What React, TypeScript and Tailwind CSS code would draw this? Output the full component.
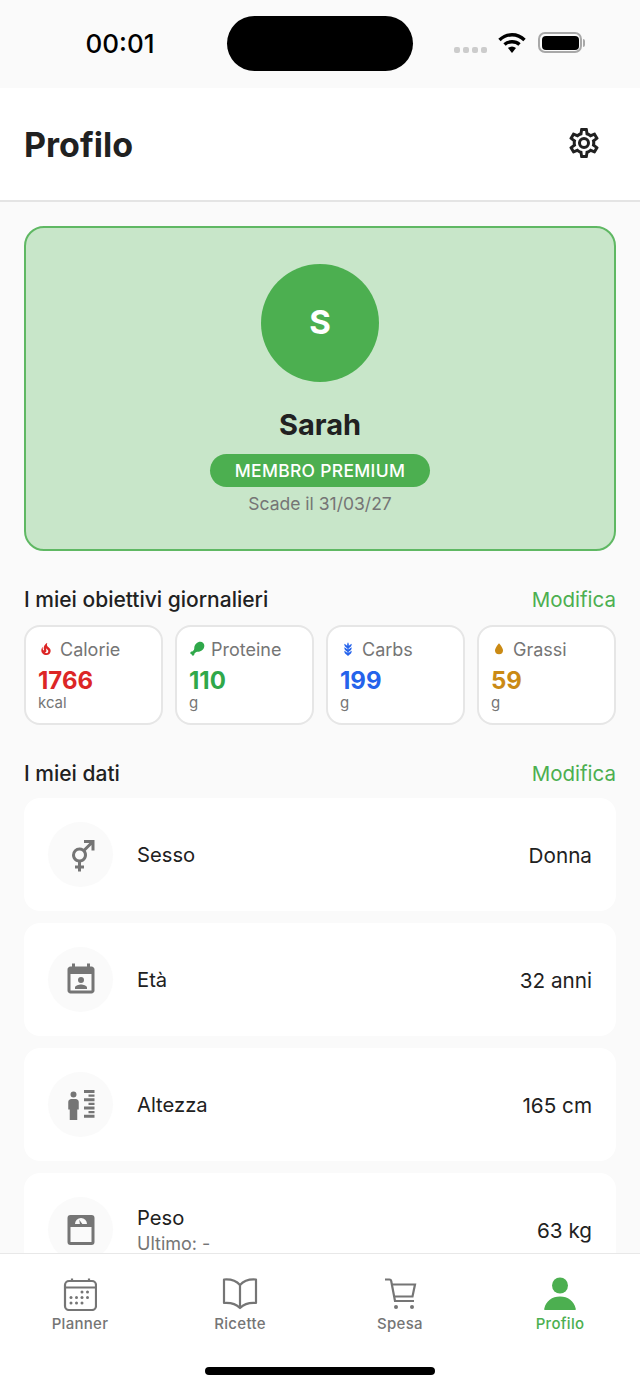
import React from "react";

const P = {
  cog: "M12,8A4,4 0 0,1 16,12A4,4 0 0,1 12,16A4,4 0 0,1 8,12A4,4 0 0,1 12,8M12,10A2,2 0 0,0 10,12A2,2 0 0,0 12,14A2,2 0 0,0 14,12A2,2 0 0,0 12,10M10,22C9.75,22 9.54,21.82 9.5,21.58L9.13,18.93C8.5,18.68 7.96,18.34 7.44,17.94L4.95,18.95C4.73,19.03 4.46,18.95 4.34,18.73L2.34,15.27C2.21,15.05 2.27,14.78 2.46,14.63L4.57,12.97L4.5,12L4.57,11L2.46,9.37C2.27,9.22 2.21,8.95 2.34,8.73L4.34,5.27C4.46,5.05 4.73,4.96 4.95,5.05L7.44,6.05C7.96,5.66 8.5,5.32 9.13,5.07L9.5,2.42C9.54,2.18 9.75,2 10,2H14C14.25,2 14.46,2.18 14.5,2.42L14.87,5.07C15.5,5.32 16.04,5.66 16.56,6.05L19.05,5.05C19.27,4.96 19.54,5.05 19.66,5.27L21.66,8.73C21.79,8.95 21.73,9.22 21.54,9.37L19.43,11L19.5,12L19.43,13L21.54,14.63C21.73,14.78 21.79,15.05 21.66,15.27L19.66,18.73C19.54,18.95 19.27,19.04 19.05,18.95L16.56,17.95C16.04,18.34 15.5,18.68 14.87,18.93L14.5,21.58C14.46,21.82 14.25,22 14,22H10M11.25,4L10.88,6.61C9.68,6.86 8.62,7.5 7.85,8.39L5.44,7.35L4.69,8.65L6.8,10.2C6.4,11.37 6.4,12.64 6.8,13.8L4.68,15.36L5.43,16.66L7.86,15.62C8.63,16.5 9.68,17.14 10.87,17.38L11.24,20H12.76L13.13,17.39C14.32,17.14 15.37,16.5 16.14,15.62L18.57,16.66L19.32,15.36L17.2,13.81C17.6,12.64 17.6,11.37 17.2,10.2L19.31,8.65L18.56,7.35L16.15,8.39C15.38,7.5 14.32,6.86 13.12,6.62L12.75,4H11.25Z",
  fire: "M17.66 11.2C17.43 10.9 17.15 10.64 16.89 10.38C16.22 9.78 15.46 9.35 14.82 8.72C13.33 7.26 13 4.85 13.95 3C13 3.23 12.17 3.75 11.46 4.32C8.87 6.4 7.85 10.07 9.07 13.22C9.11 13.32 9.15 13.42 9.15 13.55C9.15 13.77 9 13.97 8.8 14.05C8.57 14.15 8.33 14.09 8.14 13.93C8.08 13.88 8.04 13.83 8 13.76C6.87 12.33 6.69 10.28 7.45 8.64C5.78 10 4.87 12.3 5 14.47C5.06 14.97 5.12 15.47 5.29 15.97C5.43 16.57 5.7 17.17 6 17.7C7.08 19.43 8.95 20.67 10.96 20.92C13.1 21.19 15.39 20.8 17.03 19.32C18.86 17.66 19.5 15 18.56 12.72L18.43 12.46C18.22 12 17.66 11.2 17.66 11.2M14.5 17.5C14.22 17.74 13.76 18 13.4 18.1C12.28 18.5 11.16 17.94 10.5 17.28C11.69 17 12.4 16.12 12.61 15.23C12.78 14.43 12.46 13.77 12.33 13C12.21 12.26 12.23 11.63 12.5 10.94C12.69 11.32 12.89 11.7 13.13 12C13.9 13 15.11 13.44 15.37 14.8C15.41 14.94 15.43 15.08 15.43 15.23C15.46 16.05 15.1 16.95 14.5 17.5H14.5Z",
  drum: "M23 7C23 3.5 20.5 1 17 1C12.5 1 8.5 5 8 9.5C7.8 11 8 12.5 7.3 13.5L5 15.8C4.3 15.6 3.3 15.7 2.6 16.4C1.7 17.3 1.7 18.6 2.4 19.3C2.8 19.7 3.3 19.9 3.9 19.9C3.9 20.5 4.1 21 4.5 21.4C5.2 22.2 6.5 22.2 7.4 21.3C8.1 20.6 8.2 19.7 8 19L10.3 16.7C11.3 16 13 16.2 14.5 16C19 15.5 23 11.5 23 7Z",
  barley: "M7.33,18.33C6.5,17.17 6.5,15.83 6.5,14.5C8.17,15.5 9.83,16.5 10.67,17.67L11,18.23V15.95C9.5,15.05 8.08,14.13 7.33,13.08C6.5,11.92 6.5,10.58 6.5,9.25C8.17,10.25 9.83,11.25 10.67,12.42L11,13V10.7C9.5,9.8 8.08,8.88 7.33,7.83C6.5,6.67 6.5,5.33 6.5,4C8.17,5 9.83,6 10.67,7.17C10.77,7.31 10.86,7.46 10.94,7.62C10.77,7 10.66,6.42 10.66,5.83C10.66,4.5 11.33,3.17 12,2C12.67,3.17 13.33,4.5 13.33,5.83C13.33,6.42 13.23,7 13.06,7.62C13.14,7.46 13.23,7.31 13.33,7.17C14.17,6 15.83,5 17.5,4C17.5,5.33 17.5,6.67 16.67,7.83C15.92,8.88 14.5,9.8 13,10.7V13L13.33,12.42C14.17,11.25 15.83,10.25 17.5,9.25C17.5,10.58 17.5,11.92 16.67,13.08C15.92,14.13 14.5,15.05 13,15.95V18.23L13.33,17.67C14.17,16.5 15.83,15.5 17.5,14.5C17.5,15.83 17.5,17.17 16.67,18.33C15.92,19.38 14.5,20.3 13,21.2V22H11V21.2C9.5,20.3 8.08,19.38 7.33,18.33Z",
  water: "M12,20A6,6 0 0,1 6,14C6,10 12,3.25 12,3.25C12,3.25 18,10 18,14A6,6 0 0,1 12,20Z",
  gender: "M17.58,4H14V2H21V9H19V5.41L15.17,9.24C15.69,10.03 16,11 16,12C16,14.42 14.28,16.44 12,16.9V19H14V21H12V23H10V21H8V19H10V16.9C7.72,16.44 6,14.42 6,12A5,5 0 0,1 11,7C12,7 12.96,7.3 13.75,7.83L17.58,4M11,9A3,3 0 0,0 8,12A3,3 0 0,0 11,15A3,3 0 0,0 14,12A3,3 0 0,0 11,9Z",
  calendar: "M19 3H18V1H16V3H8V1H6V3H5C3.9 3 3 3.9 3 5V19C3 20.1 3.9 21 5 21H19C20.1 21 21 20.1 21 19V5C21 3.9 20.1 3 19 3M19 19H5V8H19V19M12 10A2 2 0 1 1 12 14A2 2 0 1 1 12 10M8 18V17C8 15.7 10.7 15 12 15S16 15.7 16 17V18H8Z",
  height: "M7 3A2 2 0 1 1 7 7A2 2 0 1 1 7 3M5.5 8H8.5C9.6 8 10.5 8.9 10.5 10V15H9.5V22H4.5V15H3.5V10C3.5 8.9 4.4 8 5.5 8M14 2H21V4H14V2M17 5H21V6.5H17V5M14 7.5H21V9.5H14V7.5M17 10.5H21V12H17V10.5M14 13H21V15H14V13M17 16H21V17.5H17V16M14 18.5H21V20.5H14V18.5",
  scale: "M5,2H19A2,2 0 0,1 21,4V20A2,2 0 0,1 19,22H5A2,2 0 0,1 3,20V4A2,2 0 0,1 5,2M12,4A4,4 0 0,0 8,8H11.26L10.85,5.23L12.9,8H16A4,4 0 0,0 12,4M5,10V20H19V10H5Z",
};

function Mdi({ d, size, color }: { d: string; size: number; color: string }) {
  return (
    <svg width={size} height={size} viewBox="0 0 24 24" fill={color} className="shrink-0">
      <path d={d} />
    </svg>
  );
}

function Macro({ icon, label, value, unit, color }: { icon: string; label: string; value: string; unit: string; color: string }) {
  return (
    <div className="h-[100px] rounded-2xl border-2 border-[#e6e6e6] bg-white pl-[12px] pt-[10px]">
      <div className="flex h-[24px] items-center gap-[6px]">
        <Mdi d={icon} size={16} color={color} />
        <span className="text-[18px] text-[#757575]">{label}</span>
      </div>
      <div className="mt-[6px] text-[24px] leading-[28px] font-bold" style={{ color }}>{value}</div>
      <div className="-mt-[1px] text-[15px] leading-[18px] text-[#757575]">{unit}</div>
    </div>
  );
}

function DataRow({ icon, label, sub, value }: { icon: string; label: string; sub?: string; value: string }) {
  return (
    <div className="flex h-[113px] shrink-0 items-center rounded-2xl bg-white px-[24px]">
      <div className="flex h-[65px] w-[65px] items-center justify-center rounded-full bg-[#fafafa]">
        <Mdi d={icon} size={36} color="#757575" />
      </div>
      <div className="ml-[24px] flex-1">
        <div className="text-[20.2px] leading-[26px] text-[#212121]">{label}</div>
        {sub && <div className="mt-[3px] text-[18px] leading-[20px] text-[#757575]">{sub}</div>}
      </div>
      <div className="mt-[2px] text-[20.7px] text-[#212121]">{value}</div>
    </div>
  );
}

function SectionHead({ title }: { title: string }) {
  return (
    <div className="flex items-center justify-between">
      <span className="text-[21px] leading-[26px] font-medium text-[#212121]">{title}</span>
      <span className="text-[20.5px] leading-[26px] text-[#4caf50]">Modifica</span>
    </div>
  );
}

function NavItem({ label, active, children }: { label: string; active?: boolean; children: React.ReactNode }) {
  return (
    <div className="flex w-[160px] flex-col items-center">
      <div className="flex h-[36px] w-[36px] items-center justify-center">{children}</div>
      <span className={`mt-[3px] text-[15px] leading-[18px] font-medium tracking-[0.3px] ${active ? "text-[#4caf50]" : "text-[#757575]"}`}>{label}</span>
    </div>
  );
}

export default function App() {
  return (
    <div className="flex h-[1387px] w-[640px] flex-col overflow-hidden bg-[#fafafa] font-['Inter',sans-serif]">
      {/* status bar */}
      <div className="flex h-[88px] shrink-0 items-start bg-[#fafafa]">
        <div className="mt-[27px] w-[240px] text-center text-[26px] leading-[34px] font-medium text-black">00:01</div>
        <div className="mt-[16px] -ml-[13px] h-[55px] w-[186px] rounded-full bg-black" />
        <div className="mt-[32px] ml-[41px] flex items-center">
          <div className="mt-[15px] flex gap-[3px]">
            <i className="h-[6px] w-[6px] rounded-[2px] bg-[#cccccc]" />
            <i className="h-[6px] w-[6px] rounded-[2px] bg-[#cccccc]" />
            <i className="h-[6px] w-[6px] rounded-[2px] bg-[#cccccc]" />
            <i className="h-[6px] w-[6px] rounded-[2px] bg-[#cccccc]" />
          </div>
          <svg width="28" height="21" viewBox="0 0 28 21" className="ml-[11px]">
            <path d="M1.5 8C8.5 1 19.5 1 26.5 8" fill="none" stroke="#000" strokeWidth="3.4" />
            <path d="M6.5 12.5C10.5 8.8 17.5 8.8 21.5 12.5" fill="none" stroke="#000" strokeWidth="3.4" />
            <path d="M10 16C12.5 14 15.5 14 18 16L14 21Z" fill="#000" />
          </svg>
          <div className="ml-[12px] flex items-center">
            <div className="flex h-[21px] w-[44px] items-center justify-center rounded-[7px] border-2 border-[#a8a8a8]">
              <div className="h-[14px] w-[37px] rounded-[4px] bg-black" />
            </div>
            <div className="ml-[1px] h-[8px] w-[2px] rounded-r bg-[#a8a8a8]" />
          </div>
        </div>
      </div>

      {/* header */}
      <div className="flex h-[114px] shrink-0 items-center justify-between border-b-2 border-[#e4e4e4] bg-white pr-[38px] pl-[24px]">
        <span className="text-[34px] font-bold text-[#212121]">Profilo</span>
        <div className="-mt-[2px]"><Mdi d={P.cog} size={36} color="#212121" /></div>
      </div>

      {/* content */}
      <div className="flex min-h-0 flex-1 flex-col overflow-hidden px-[24px] pt-[24px]">
        <div className="flex h-[325px] shrink-0 flex-col items-center rounded-[20px] border-2 border-[#5fb863] bg-[#c8e6c9] pt-[36px]">
          <div className="flex h-[118px] w-[118px] items-center justify-center rounded-full bg-[#4caf50] text-[33px] font-bold text-white">S</div>
          <div className="mt-[22px] text-[29px] leading-[42px] font-bold text-[#212121]">Sarah</div>
          <div className="mt-[8px] flex h-[33px] w-[220px] items-center justify-center rounded-full bg-[#4caf50] pt-[1px] text-[17.5px] font-medium tracking-[0.3px] text-white">MEMBRO PREMIUM</div>
          <div className="mt-[6px] text-[17.5px] leading-[22px] text-[#757575]">Scade il 31/03/27</div>
        </div>

        <div className="mt-[36px] shrink-0"><SectionHead title="I miei obiettivi giornalieri" /></div>
        <div className="mt-[12px] grid shrink-0 grid-cols-4 gap-[12px]">
          <Macro icon={P.fire} label="Calorie" value="1766" unit="kcal" color="#dc2626" />
          <Macro icon={P.drum} label="Proteine" value="110" unit="g" color="#2fa84a" />
          <Macro icon={P.barley} label="Carbs" value="199" unit="g" color="#2563eb" />
          <Macro icon={P.water} label="Grassi" value="59" unit="g" color="#ca8a14" />
        </div>

        <div className="mt-[36px] shrink-0"><SectionHead title="I miei dati" /></div>
        <div className="mt-[11px] flex flex-col gap-[12px]">
          <DataRow icon={P.gender} label="Sesso" value="Donna" />
          <DataRow icon={P.calendar} label="Età" value="32 anni" />
          <DataRow icon={P.height} label="Altezza" value="165 cm" />
          <DataRow icon={P.scale} label="Peso" sub="Ultimo: -" value="63 kg" />
        </div>
      </div>

      {/* tab bar */}
      <div className="relative h-[134px] shrink-0 border-t border-[#e8e8e8] bg-white pt-[22px]">
        <div className="flex">
          <NavItem label="Planner">
            <svg width="34" height="34" viewBox="0 0 34 34" fill="none" stroke="#757575" strokeWidth="2.2">
              <rect x="2" y="4" width="31" height="29" rx="4" />
              <path d="M2 10.5H33M9 1.5V5M26 1.5V5" />
              <g fill="#757575" stroke="none">
                <circle cx="19" cy="15" r="1.5" /><circle cx="24.5" cy="15" r="1.5" />
                <circle cx="8" cy="20.5" r="1.5" /><circle cx="13.5" cy="20.5" r="1.5" /><circle cx="19" cy="20.5" r="1.5" /><circle cx="24.5" cy="20.5" r="1.5" />
                <circle cx="8" cy="26" r="1.5" /><circle cx="13.5" cy="26" r="1.5" /><circle cx="19" cy="26" r="1.5" />
              </g>
            </svg>
          </NavItem>
          <NavItem label="Ricette">
            <svg width="36" height="34" viewBox="0 0 36 34" fill="none" stroke="#757575" strokeWidth="2.2" strokeLinejoin="round">
              <path d="M18 8C14 3.5 8 2 2 2.5V26C8 25.5 14 27 18 31C22 27 28 25.5 34 26V2.5C28 2 22 3.5 18 8Z" />
              <path d="M18 8V31" />
            </svg>
          </NavItem>
          <NavItem label="Spesa">
            <svg width="34" height="34" viewBox="0 0 34 34" fill="none" stroke="#757575" strokeWidth="2.2">
              <path d="M2 2.5H6.5C7.5 2.5 8 3 8.2 4L12 24H31" />
              <path d="M9 7.5H32L29.5 19.5H11" />
              <circle cx="13" cy="30" r="2" fill="#757575" stroke="none" />
              <circle cx="29" cy="30" r="2" fill="#757575" stroke="none" />
            </svg>
          </NavItem>
          <NavItem label="Profilo" active>
            <svg width="32" height="34" viewBox="0 0 32 34" fill="#4caf50">
              <circle cx="16" cy="8.5" r="8" />
              <path d="M1 33C.5 33 0 32.5 .3 31.5C2 24 8 19.5 16 19.5S30 24 31.7 31.5C32 32.5 31.5 33 31 33Z" />
            </svg>
          </NavItem>
        </div>
        <div className="absolute bottom-[12px] left-[205px] h-[8px] w-[230px] rounded-full bg-black" />
      </div>
    </div>
  );
}
